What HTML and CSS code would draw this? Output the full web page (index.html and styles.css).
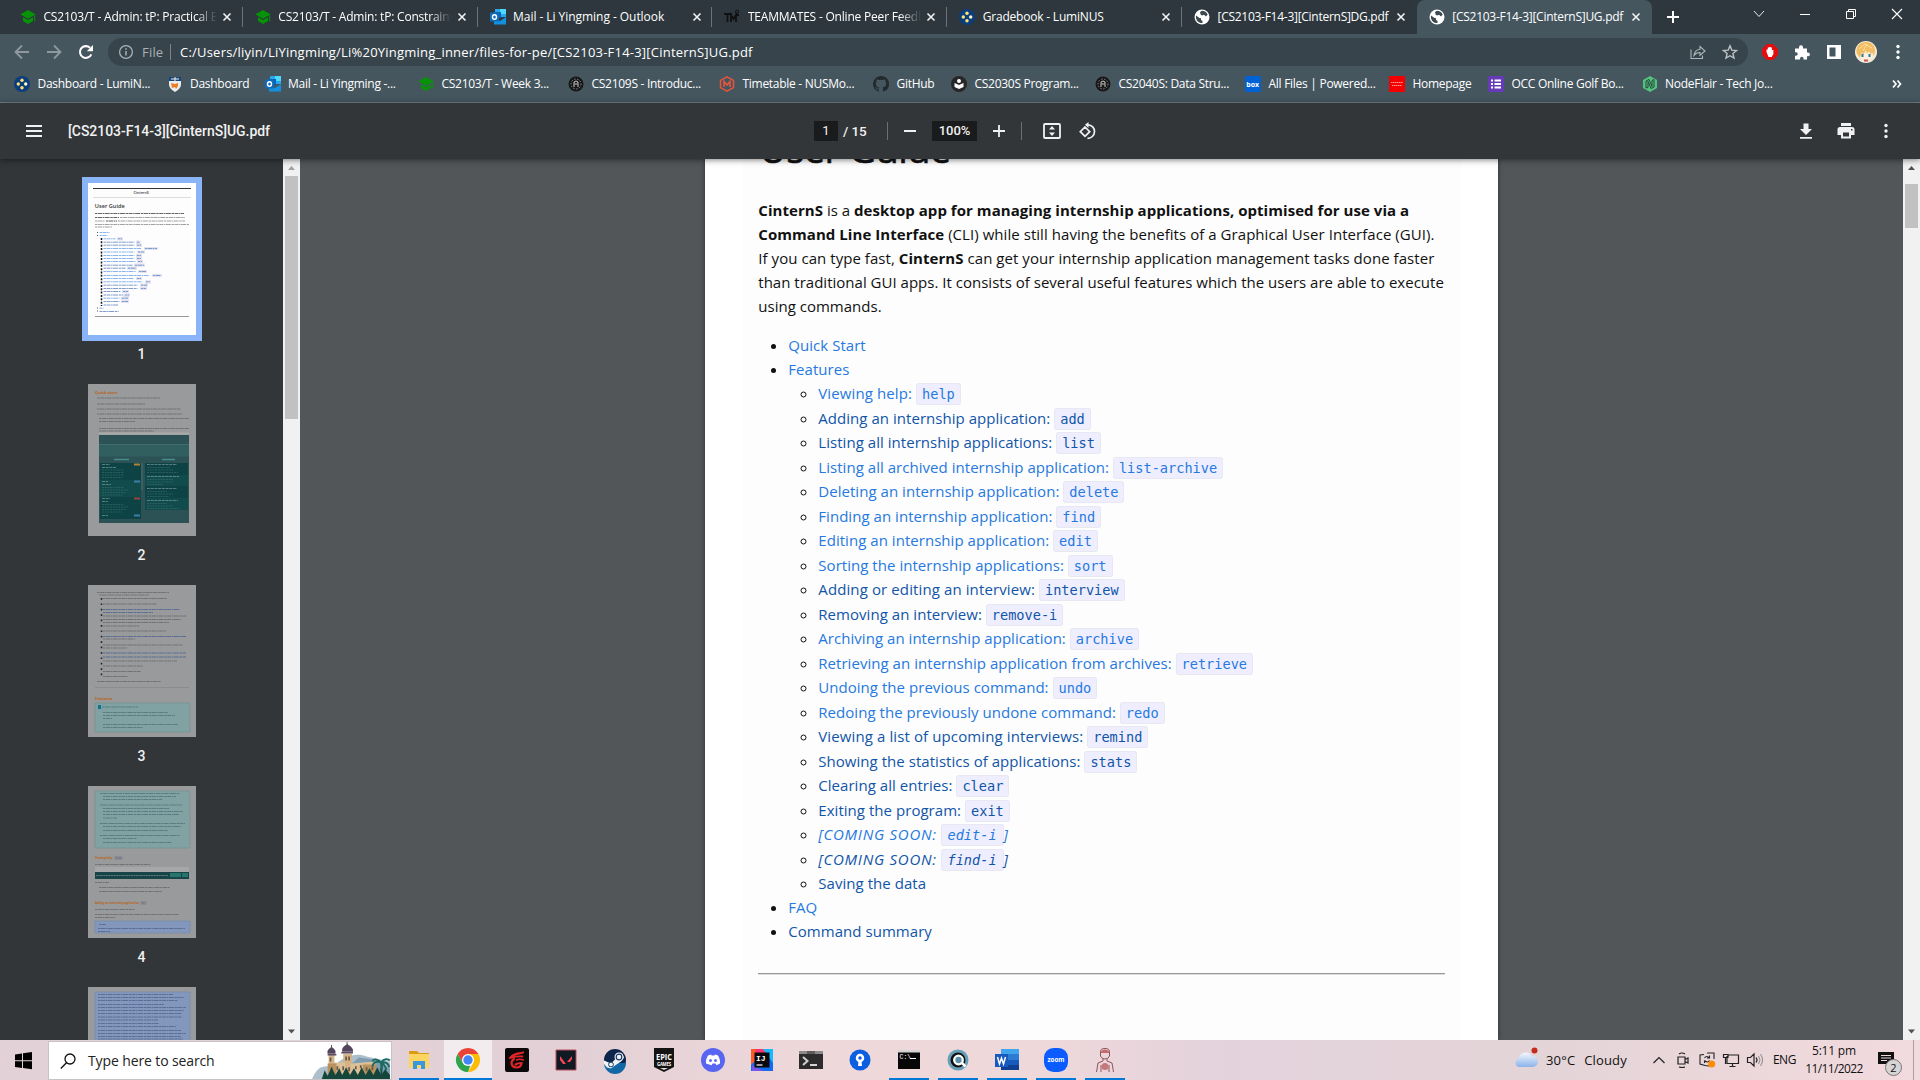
FILE: index.html
```html
<!DOCTYPE html>
<html lang="en">
<head>
<meta charset="utf-8">
<title>[CS2103-F14-3][CinternS]UG.pdf</title>
<link rel="stylesheet" href="styles.css">
</head>
<body>
<svg class="defs" width="0" height="0">
  <symbol id="cap" viewBox="0 0 16 16"><path fill="#079307" d="M8 1l7.500 4.200v.3L8 9.700.5 5.500v-.3zM3 8.300l5 2.800 5-2.800v3.600L8 15l-5-3.100zM14.200 6.500h1v6h-1z"/></symbol>
  <symbol id="outlook" viewBox="0 0 16 16"><path fill="#28a8ea" d="M5 0h11v8H5z"/><path fill="#50d9ff" d="M10 0h6v5h-6z"/><path fill="#0364b8" d="M4 3h7v6H4z"/><path fill="#1490df" d="M4 15.500V9l6 3 6-4v7.500z"/><path fill="#0f6cbd" d="M0 3.500h9v9H0z"/><ellipse cx="4.500" cy="8" rx="2" ry="2.300" fill="none" stroke="#fff" stroke-width="1.400"/></symbol>
  <symbol id="lumi" viewBox="0 0 16 16"><circle cx="8" cy="8" r="8" fill="#0b3d7f"/><g fill="#fbe66b"><circle cx="8" cy="4.300" r="1.700"/><circle cx="8" cy="11.700" r="1.700"/><circle cx="4.300" cy="8" r="1.700"/></g><circle cx="11.700" cy="8" r="1.700" fill="#fff7c4"/></symbol>
  <symbol id="globe" viewBox="0 0 16 16"><circle cx="8" cy="8" r="7.500" fill="#fff"/><path fill="#3b4950" d="M2 6.500l3.500 2.500 1.500.300v1.700l1.600 1-.200 2C4.500 14.300 2 11.500 1.900 8zM6 3l2-1.200c2.500 0 4.700 1.500 5.700 3.700L12 7.600l-2-1.800-2 .7-1.400-1z"/></symbol>
  <symbol id="x" viewBox="0 0 10 10"><path d="M1.500 1.500l7 7m0-7l-7 7" stroke="#f1f3f4" stroke-width="1.600"/></symbol>
  <symbol id="dots" viewBox="0 0 16 16"><g fill="currentColor"><circle cx="8" cy="2.500" r="1.700"/><circle cx="8" cy="8" r="1.700"/><circle cx="8" cy="13.500" r="1.700"/></g></symbol>
  <symbol id="ring" viewBox="0 0 16 16"><circle cx="8" cy="8" r="7.500" fill="#171717"/><circle cx="8" cy="8" r="5" fill="none" stroke="#888" stroke-dasharray="1.500 1.500"/><path d="M6 11V6l2-1 2 1v5M6.500 8h3" stroke="#ccc" fill="none"/></symbol>
</svg>

<header class="tabs">
  <div class="tab"><svg class="fav"><use href="#cap"/></svg><span class="tab-title">CS2103/T - Admin: tP: Practical Exam</span><svg class="close"><use href="#x"/></svg></div>
  <div class="tab"><svg class="fav"><use href="#cap"/></svg><span class="tab-title">CS2103/T - Admin: tP: Constraints</span><svg class="close"><use href="#x"/></svg></div>
  <div class="tab"><svg class="fav"><use href="#outlook"/></svg><span class="tab-title full">Mail - Li Yingming - Outlook</span><svg class="close"><use href="#x"/></svg></div>
  <div class="tab"><svg class="fav" viewBox="0 0 16 16"><path d="M0 5h8M3.500 5v8M7 13V6l2.500 4L12 6v7" fill="none" stroke="#111" stroke-width="1.800"/><circle cx="13" cy="2.800" r="1.600" fill="none" stroke="#111"/><path d="M11 6h4" stroke="#111" stroke-width="2"/></svg><span class="tab-title">TEAMMATES - Online Peer Feedback</span><svg class="close"><use href="#x"/></svg></div>
  <div class="tab"><svg class="fav"><use href="#lumi"/></svg><span class="tab-title full snug">Gradebook - LumiNUS</span><svg class="close"><use href="#x"/></svg></div>
  <div class="tab"><svg class="fav"><use href="#globe"/></svg><span class="tab-title full tight">[CS2103-F14-3][CinternS]DG.pdf</span><svg class="close"><use href="#x"/></svg></div>
  <div class="tab active"><svg class="fav"><use href="#globe"/></svg><span class="tab-title full tight">[CS2103-F14-3][CinternS]UG.pdf</span><svg class="close"><use href="#x"/></svg></div>
  <svg class="newtab" viewBox="0 0 14 14"><path d="M7 1v12M1 7h12" stroke="#fff" stroke-width="2"/></svg>
  <div class="window-buttons">
    <svg viewBox="0 0 12 12"><path d="M1 3l5 5.500L11 3" fill="none" stroke="#e8eaed"/></svg>
    <svg viewBox="0 0 12 12"><path d="M1 6.500h10" stroke="#fff"/></svg>
    <svg viewBox="0 0 12 12"><path d="M1.500 3.500h7v7h-7zM3.500 3.500v-2h7v7h-2" fill="none" stroke="#fff"/></svg>
    <svg viewBox="0 0 12 12"><path d="M1 1l10 10M11 1L1 11" stroke="#fff" stroke-width="1.100"/></svg>
  </div>
</header>

<div class="toolbar">
  <div class="nav">
    <svg viewBox="0 0 16 16"><path d="M15 8H2M8 1.500L1.500 8 8 14.500" fill="none" stroke="#8d999f" stroke-width="1.800"/></svg>
    <svg viewBox="0 0 16 16"><path d="M1 8h13M8 1.500L14.500 8 8 14.500" fill="none" stroke="#8d999f" stroke-width="1.800"/></svg>
    <svg viewBox="0 0 16 16"><path d="M13.300 10.300A5.900 5.900 0 1 1 12 3.800" fill="none" stroke="#fff" stroke-width="2.100"/><path d="M15 1v6.200H8.800z" fill="#fff"/></svg>
  </div>
  <div class="address">
    <svg class="info" viewBox="0 0 16 16"><circle cx="8" cy="8" r="6.400" fill="none" stroke="#a9b2b7" stroke-width="1.300"/><path d="M8 7v4.500M8 4.300v1.500" stroke="#a9b2b7" stroke-width="1.500"/></svg>
    <span class="scheme">File</span><span class="bar"></span>
    <span class="url">C:/Users/liyin/LiYingming/Li%20Yingming_inner/files-for-pe/[CS2103-F14-3][CinternS]UG.pdf</span>
    <svg class="share" viewBox="0 0 16 16"><path d="M1 5.500v9h11.500v-3M4 11.500c.5-4 3-6 6-6.300V2.500L15 7l-5 4.200V8.500c-3-.2-4.500 1-6 3z" fill="none" stroke="#adb6ba" stroke-width="1.100"/></svg>
    <svg class="star" viewBox="0 0 16 16"><path d="M8 1.800l1.800 4.300 4.700.4-3.600 3 1.100 4.600L8 11.700l-4 2.400 1.100-4.600-3.600-3 4.700-.4z" fill="none" stroke="#bcc3c6" stroke-width="1.400"/></svg>
  </div>
  <div class="extensions">
    <svg viewBox="0 0 16 16"><path d="M5 0h6l5 5v6l-5 5H5l-5-5V5z" fill="#e40d0d"/><path d="M4.500 8V5.500h1.300V3.500h1.400V3h1.400v.5h1.300v2.600h1.500V10l-1.700 3H6.500z" fill="#fff"/></svg>
    <svg viewBox="0 0 16 16"><path d="M1 4.500h4V3.300a2 2 0 0 1 4 0v1.200h4v4h1a1.900 1.900 0 0 1 0 3.800h-1v3.200H9.500v-1a1.700 1.700 0 0 0-3.400 0v1H1v-3.800h1a1.700 1.700 0 0 0 0-3.400H1z" fill="#fff"/></svg>
    <svg viewBox="0 0 16 16"><path fill="#fff" fill-rule="evenodd" d="M1 1h14v14H1zM3.500 3.500v9h6v-9z"/></svg>
    <svg class="avatar" viewBox="0 0 22 22"><circle cx="11" cy="11" r="11" fill="#f3ead8"/><path d="M5 12h12v4l-4 4H9l-4-4z" fill="#fff0e2"/><path d="M1.500 12C1 5 5 1 11 1s9 4 9 9l-1 5-2-4-1 3-2-4-2 3-1-4-3 5-1-3-2 6z" fill="#f2bd62"/><path d="M4 8l6-5 7 4M12 3l-4 7" stroke="#ffe1a0" fill="none"/><path d="M7.500 13v3M14.500 13v3" stroke="#287d91" stroke-width="2"/><path d="M9 18.500h4v2H9z" fill="#c95552"/></svg>
    <svg class="menu"><use href="#dots"/></svg>
  </div>
</div>

<nav class="bookmarks">
  <a style="width:152.500px"><svg><use href="#lumi"/></svg>Dashboard - LumiN...</a>
  <a style="width:98px"><svg viewBox="0 0 16 16"><path d="M2 1h12v7c0 4-3 6-6 8-3-2-6-4-6-8z" fill="#e9edf0"/><path d="M2 1h12v4H2z" fill="#18467d"/><path d="M4 3h8M8 1v4" stroke="#f1f1f1"/><path d="M4 7l4 1 3-1v3l-2 3-1-2-3 1z" fill="#ee7c25"/></svg>Dashboard</a>
  <a style="width:153.500px"><svg><use href="#outlook"/></svg>Mail - Li Yingming -...</a>
  <a style="width:150px"><svg><use href="#cap"/></svg>CS2103/T - Week 3...</a>
  <a style="width:151px"><svg><use href="#ring"/></svg>CS2109S - Introduc...</a>
  <a style="width:154px"><svg viewBox="0 0 16 16"><path d="M8 .8l6.500 3.600v7.200L8 15.200l-6.500-3.600V4.400z" fill="none" stroke="#e8543c" stroke-width="1.500"/><path d="M5 11V5.500l3 3.500 3-3.500V11" fill="none" stroke="#e8543c" stroke-width="1.600"/></svg>Timetable - NUSMo...</a>
  <a style="width:78px"><svg viewBox="0 0 16 16"><path fill="#24292e" d="M8 0a8 8 0 0 0-2.500 15.600c.4 0 .5-.2.500-.4v-1.500c-2.200.5-2.700-1-2.700-1-.4-.9-.9-1.200-.9-1.200-.7-.5.1-.5.1-.5.8 0 1.200.8 1.200.8.7 1.300 1.900.9 2.300.7.100-.5.300-.9.500-1.100-1.800-.2-3.600-.9-3.600-4 0-.9.300-1.600.8-2.100-.1-.2-.4-1 .1-2.100 0 0 .7-.2 2.200.8a7.600 7.600 0 0 1 4 0c1.500-1 2.200-.8 2.200-.8.400 1.100.2 1.900.1 2.100.5.500.8 1.200.8 2.100 0 3.100-1.900 3.700-3.700 3.900.3.300.6.800.6 1.500v2.400c0 .2.100.5.600.4A8 8 0 0 0 8 0z"/></svg>GitHub</a>
  <a style="width:144px"><svg viewBox="0 0 16 16"><circle cx="8" cy="8" r="8" fill="#272727"/><path d="M3.500 7L8 9l4.500-2v4L8 13l-4.500-2z" fill="#fff"/><circle cx="8" cy="5" r="2" fill="#fff"/></svg>CS2030S Program...</a>
  <a style="width:150px"><svg><use href="#ring"/></svg>CS2040S: Data Stru...</a>
  <a style="width:144px"><svg viewBox="0 0 16 16"><rect width="16" height="16" rx="2" fill="#0061d5"/><text x="1.300" y="10.500" font-size="7" font-weight="700" fill="#fff" letter-spacing="0">box</text></svg>All Files | Powered...</a>
  <a style="width:99px"><svg viewBox="0 0 16 16"><path d="M0 0h16v16H0z" fill="#f40000"/><path d="M2 6.500h12M3 9.500h10" stroke="#ff9c94" stroke-dasharray="1.500 .5"/></svg>Homepage</a>
  <a style="width:153.500px"><svg viewBox="0 0 16 16"><rect width="16" height="16" rx="1" fill="#673ab7"/><path d="M3 4.500h2M3 8h2M3 11.500h2M6.500 4.500H13M6.500 8H13M6.500 11.500H13" stroke="#fff" stroke-width="1.800"/></svg>OCC Online Golf Bo...</a>
  <a><svg viewBox="0 0 16 16"><path d="M8 0l7 4v8l-7 4-7-4V4z" fill="#55c17e"/><path d="M4 12V5l3-1.500 3 7V4.500l2-1V11l-3 1.500-3-7v6z" fill="none" stroke="#24483a"/></svg>NodeFlair - Tech Jo...</a>
  <svg class="more" viewBox="0 0 10 10"><path d="M1 1.500L4 5 1 8.500M5.500 1.500l3 3.500-3 3.500" fill="none" stroke="#fff" stroke-width="1.700"/></svg>
</nav>

<div class="pdfbar">
  <svg class="burger" viewBox="0 0 16 16"><path d="M0 3h16M0 8h16M0 13h16" stroke="#f1f1f1" stroke-width="2"/></svg>
  <span class="doc-title">[CS2103-F14-3][CinternS]UG.pdf</span>
  <span class="field page-no">1</span><span class="of">/ 15</span>
  <i class="rule r1"></i>
  <svg class="minus" viewBox="0 0 12 12"><path d="M0 6h12" stroke="#f1f1f1" stroke-width="2"/></svg>
  <span class="field zoom">100%</span>
  <svg class="plus" viewBox="0 0 12 12"><path d="M0 6h12M6 0v12" stroke="#f1f1f1" stroke-width="1.800"/></svg>
  <i class="rule r2"></i>
  <svg class="fit" viewBox="0 0 18 16"><rect x="1" y="1" width="16" height="14" rx="1" fill="none" stroke="#f1f1f1" stroke-width="1.800"/><path d="M9 3l3 3.500H6zM9 13l3-3.500H6z" fill="#f1f1f1"/></svg>
  <svg class="rotate" viewBox="0 0 18 18"><path d="M6 5l4.700 4.700L6 14.400 1.300 9.700zM9 2.800a6.700 6.700 0 1 1-.5 13.500" fill="none" stroke="#f1f1f1" stroke-width="1.700"/><path d="M9.500 0v6L6 2.800z" fill="#f1f1f1"/></svg>
  <div class="pdf-actions">
    <svg viewBox="0 0 18 18"><path d="M6.500 1.500h5v5.500H15l-6 6-6-6h3.500zM3 15h12v1.800H3z" fill="#f1f1f1"/></svg>
    <svg viewBox="0 0 18 18"><path fill="#f1f1f1" fill-rule="evenodd" d="M4 1h10v3H4zM3 5h12a2.500 2.500 0 0 1 2.500 2.500V13H14v3.500H4V13H.5V7.500A2.500 2.500 0 0 1 3 5zm3 5.500v4h6v-4zm8-3.500v1.500h1.500V7z"/></svg>
    <svg viewBox="-1 -1 18 18"><use href="#dots" width="16" height="16"/></svg>
  </div>
</div>

<main class="viewer">
  <aside class="thumbs">
    <figure class="selected">
      <svg viewBox="0 0 108 152">
        <path fill="#fff" d="M0 0h108v152H0z"/><path fill="#fdfdfd" d="M5 6h98v142H5z"/>
        <path d="M5 5.500h98" stroke="#333"/><path d="M5 14.500h98" stroke="#ddd"/>
        <text x="45.500" y="11" font-size="3.700" font-weight="600" fill="#333">CinternS</text>
        <text x="6.800" y="24.500" font-size="5.600" font-weight="600" fill="#333">User Guide</text>
        <path class="ink bold" d="M7 30.500h89M7 34.500h24M18 38h11"/><path class="ink" d="M32 34.500h65M7 38h10M30 38h67M7 41.500h94M7 44h17"/>
        <path class="blue ink" d="M11.500 49.500h10M11.500 52.500h8M15.500 55.800h12M15.500 65.500h38M15.500 69h31M15.500 72.500h31M15.500 75.500h30M15.500 78.500h32M15.500 88.500h32M15.500 92.500h46M15.500 95.500h30M15.500 98.800h39M15.500 115.200h16M11.500 125.200h4"/>
        <path class="navy ink" d="M15.500 59.200h31M15.500 62.200h31M15.500 82.200h29M15.500 85.200h22M15.500 102.200h34M15.500 105.500h34M15.500 108.500h17M15.500 112h20M15.500 118.500h16M15.500 122h15M11.500 128.500h19"/>
        <path d="M29 55.800h6M48 59.200h4.500M48 62.200h6M56 65.500h14M49 69h8M48 72.500h6M48 75.500h6M49 78.500h6M46 82.200h11M39 85.200h10M50 88.500h9M64 92.500h10M48 95.500h6M57 98.800h6M52 102.200h8M52 105.500h7M34 108.500h7M36 112h6M33 115.200h8M33 118.500h8" stroke="#e2e2f2" stroke-width="3.200"/>
        <path class="navy ink" d="M30 55.800h4M49 59.200h3M49 62.200h4M57 65.500h12M50 69h6M49 72.500h4M49 75.500h4M50 78.500h4M47 82.200h9M40 85.200h8M51 88.500h7M65 92.500h8M49 95.500h4M58 98.800h4M53 102.200h6M53 105.500h5M35 108.500h5M37 112h4M34 115.200h6M34 118.500h6"/>
        <path d="M13.500 55v68" stroke="#111" stroke-width="1.500" stroke-dasharray="2 1.350"/><path d="M9.500 49v4M9.500 124.500v4.500" stroke="#555" stroke-dasharray="1 2"/>
        <path d="M7 133.500h94" stroke="#999"/>
      </svg>
      <figcaption>1</figcaption>
    </figure>
    <figure>
      <svg viewBox="0 0 108 152">
        <path fill="#989a9b" d="M0 0h108v152H0z"/>
        <text x="7" y="10" font-size="4" font-weight="700" fill="#b96522">Quick start</text>
        <path class="ink dim" d="M9 14h63M9 20h48M9 25h84M9 30h85M11 34.500h90M11 37.500h36M11 44.500h90M11 47h55"/>
        <path d="M11 49.500h90" stroke="#aaa" stroke-width="2"/>
        <path fill="#2c5255" d="M11 51h90v88H11z"/><path fill="#315f60" d="M11 61h90v11.500H11z"/><path d="M11 60.500h90" stroke="#49797a" stroke-width=".7"/>
        <path fill="#0d4344" d="M12 79h41v56H12zM57 79h43v47H57z"/><path fill="#124b4c" d="M12 96h41v17H12zM57 91h43v11H57zM57 114h43v12H57z"/>
        <path d="M26 75.500h15M74 75.500h13" stroke="#438d8e" stroke-width="1.500"/>
        <path d="M46 80.500h6" stroke="#b5823a" stroke-width="2"/><path d="M46 97.500h6M46 131.500h6" stroke="#3b7eaa" stroke-width="2"/><path d="M46 114.500h6" stroke="#9d4040" stroke-width="2"/>
        <path stroke="#6b9192" stroke-width=".8" stroke-dasharray="3 .7" d="M14 80.500h8M14 83.500h14M14 97.500h6M14 100.500h9M14 114.500h8M14 117.500h6M14 131.500h6M59 80.500h30M59 92.500h32M59 104.500h30M59 116.500h31"/>
        <path stroke="#3c6e6f" stroke-width=".6" stroke-dasharray="2 .7" d="M14 86h22M14 88.500h22M14 91h22M14 93.500h20M14 103.500h22M14 106h26M14 108.500h24M14 111h20M14 120.500h22M14 123h26M14 125.500h24M14 128h20M59 83.500h23M59 86h26M59 88.500h31M59 95.500h26M59 98h27M59 100.500h16M59 107.500h20M59 110h26M59 112.500h22M59 119.500h20M59 122h26M59 124.500h32"/>
        <path d="M54 79v27" stroke="#426768" stroke-width="1.500"/>
      </svg>
      <figcaption>2</figcaption>
    </figure>
    <figure>
      <svg viewBox="0 0 108 152">
        <path fill="#989a9b" d="M0 0h108v152H0z"/>
        <path class="ink dim" d="M9 7.500h72M11 10h50M15 13.500h64M15 19h54M15 31h84M15 34.500h78M15 37.500h66M15 41h36M15 46h63M15 54h32M15 60h80M15 63h24M15 76h74M15 81h40M15 86.500h38M15 91.500h25M9 96.500h64"/>
        <path class="ink navydim" d="M15 24.500h77M15 27.500h50M15 51.500h83M15 68h83M15 72h83"/>
        <path d="M13.500 13v79" stroke="#222" stroke-width="1.500" stroke-dasharray="1.700 3.700"/><path d="M7 102.500h94" stroke="#858787" stroke-width=".7"/>
        <text x="7" y="115" font-size="4" font-weight="700" fill="#b96522">Features</text>
        <path fill="#81a2a3" stroke="#719292" stroke-width=".6" d="M7 118h95v29H7z"/><path fill="#14708d" d="M10 120h3v4h-3z"/>
        <path class="ink teal" d="M14 122h36M15 127.500h65M15 130.500h72M15 133.500h9M15 139.500h75M15 142.500h40"/>
      </svg>
      <figcaption>3</figcaption>
    </figure>
    <figure>
      <svg viewBox="0 0 108 152">
        <path fill="#989a9b" d="M0 0h108v152H0z"/><path fill="#81a2a3" stroke="#719292" stroke-width=".6" d="M7 5h95v57H7z"/>
        <path class="ink teal" d="M12 7.500h80M15 10.500h73M15 13.500h59M12 19h82M15 22.500h66M15 25.500h80M15 28.500h76M15 32h14M12 37.500h85M15 40.500h78M15 44.500h65M12 49.500h80M15 52.500h34M15 56.500h69"/>
        <text x="7" y="73.300" font-size="2.700" font-weight="700" fill="#b96522">Viewing help:</text><text x="7" y="118" font-size="2.700" font-weight="700" fill="#b96522">Adding an internship application:</text>
        <path d="M26.500 72h8M52.500 117h6" stroke="#8b8c96" stroke-width="4"/><path class="ink dim" d="M27.500 72h6M53.500 117h4M7 78.500h56M7 96.500h14M11 101.500h71M11 105.500h63M7 123.500h40M7 128.500h84M7 131.500h20"/>
        <path fill="#a5a7a8" d="M7 81h94v5H7z"/><path fill="#184448" d="M7 86h94v7H7z"/><path fill="#25746d" d="M82 87h11v4H82zM94 87h6v4h-6z"/><path d="M8 89.500h72" stroke="#6f9293" stroke-width=".7" stroke-dasharray="2 .5"/>
        <path fill="#8297bb" stroke="#7288af" stroke-width=".6" d="M7 135h95v12H7z"/><path class="ink navydim" d="M11 138.500h7M10 142.500h87M10 145.500h12"/>
      </svg>
      <figcaption>4</figcaption>
    </figure>
    <figure>
      <svg viewBox="0 0 108 152">
        <path fill="#989a9b" d="M0 0h108v152H0z"/><path fill="#8297bb" stroke="#7288af" stroke-width=".6" d="M7 5h95v147H7z"/>
        <path class="ink navydim" d="M10 7.500h75M10 10.500h86M10 13.500h80M10 17.500h66M10 20.500h88M10 23.500h86M10 26.500h84M10 30h84M10 33h60M10 36.500h61M10 39.500h78M10 43.500h83M10 46.500h88M10 49.500h83M10 52h85"/>
      </svg>
    </figure>
  </aside>
  <div class="scroll side"><svg viewBox="0 0 17 17"><path d="M5 11h7L8.500 7z" fill="#a0a0a0"/></svg><span></span><svg class="down" viewBox="0 0 17 17"><path d="M5 6.500h7l-3.500 4z" fill="#505050"/></svg></div>
  <section class="canvas">
    <article class="paper">
      <div class="content">
        <h1>User Guide</h1>
        <p><b>CinternS</b> is a <b>desktop app for managing internship applications, optimised for use via a</b><br><span class="loose"><b>Command Line Interface</b> (CLI) while still having the benefits of a Graphical User Interface (GUI).</span><br><span class="loose">If you can type fast, <b>CinternS</b> can get your internship application management tasks done faster</span><br>than traditional GUI apps. It consists of several useful features which the users are able to execute<br>using commands.</p>
        <ul class="toc">
          <li><a>Quick Start</a></li>
          <li><a>Features</a>
            <ul>
              <li><a class="w">Viewing help: <code>help</code></a></li>
              <li><a class="v">Adding an internship application: <code>add</code></a></li>
              <li><a class="v">Listing all internship applications: <code>list</code></a></li>
              <li><a>Listing all archived internship application: <code>list-archive</code></a></li>
              <li><a>Deleting an internship application: <code>delete</code></a></li>
              <li><a>Finding an internship application: <code>find</code></a></li>
              <li><a>Editing an internship application: <code>edit</code></a></li>
              <li><a>Sorting the internship applications: <code>sort</code></a></li>
              <li><a class="v w">Adding or editing an interview: <code>interview</code></a></li>
              <li><a class="v">Removing an interview: <code>remove-i</code></a></li>
              <li><a>Archiving an internship application: <code>archive</code></a></li>
              <li><a>Retrieving an internship application from archives: <code>retrieve</code></a></li>
              <li><a>Undoing the previous command: <code>undo</code></a></li>
              <li><a>Redoing the previously undone command: <code>redo</code></a></li>
              <li><a class="v w">Viewing a list of upcoming interviews: <code>remind</code></a></li>
              <li><a class="v">Showing the statistics of applications: <code>stats</code></a></li>
              <li><a class="v">Clearing all entries: <code>clear</code></a></li>
              <li><a class="v">Exiting the program: <code>exit</code></a></li>
              <li><a class="soon">[COMING SOON: <code>edit-i</code>]</a></li>
              <li><a class="v soon">[COMING SOON: <code>find-i</code>]</a></li>
              <li><a class="v">Saving the data</a></li>
            </ul>
          </li>
          <li><a>FAQ</a></li>
          <li><a class="v">Command summary</a></li>
        </ul>
        <hr>
      </div>
    </article>
  </section>
  <div class="scroll main"><svg viewBox="0 0 17 17"><path d="M5 11h7L8.500 7z" fill="#505050"/></svg><span></span><svg class="down" viewBox="0 0 17 17"><path d="M5 6.500h7l-3.500 4z" fill="#505050"/></svg></div>
</main>

<footer class="taskbar">
  <div class="start"><svg width="17" height="17" viewBox="0 0 17 17"><path d="M0 2.500l7-1v6.700H0zM8 1.300L17 0v8.200H8zM0 9.200h7V16l-7-1zM8 9.200h9V17.300L8 16z"/></svg></div>
  <div class="search">
    <svg class="lens" viewBox="0 0 16 16"><circle cx="10" cy="6" r="5" fill="none" stroke="#111" stroke-width="1.300"/><path d="M6.500 9.700L.8 15.400" stroke="#111" stroke-width="1.400"/></svg>
    <span>Type here to search</span>
    <svg class="castle" viewBox="0 0 80 38">
      <path d="M0 38c5-13 12-15 22-12 10-13 25-15 34-11l24 5v18z" fill="#aebfcb"/><path d="M12 38c5-10 14-8 20-8l16-14 15 2 17 9v11z" fill="#7f9db0"/>
      <path d="M17 13h6v25h-6zM32 12h9v26h-9z" fill="#d3b387"/><path d="M22 21h12v17H22zM40 22l25-2v18H40z" fill="#dcc196"/><path d="M16 22h9v12h-9zM52 23h14v11H52z" fill="#b9935f"/>
      <path d="M16 12c-1-4 2-5 4-7 2 2 5 3 4 7zM31 10c-1-5 3-6 5-8 3 2 7 4 6 8z" fill="#54455e"/><path d="M20 3v4M36 0v4" stroke="#555"/><path d="M16 13h9M30 11h12" stroke="#5c4b62" stroke-width="1.500"/>
      <path d="M19 16v4M35 15v4M38 15v4M20 26v4M26 25v4M32 25v4M38 26v4M45 25v3M50 24v3M56 26v4M62 25v4" stroke="#6b5a4b" stroke-width="1.800"/>
      <path d="M71 38c0-7 1-12 0-17" stroke="#1b4f4c" stroke-width="2" fill="none"/><path d="M71 21c-5-2-8 0-9 4M71 21c-4-4-8-4-9-1M71 21c3-4 7-4 9-2M71 21c4-1 8 1 8 5M71 21c1 3 1 6-1 8M71 21c3 2 5 5 5 8" fill="none" stroke="#196b63" stroke-width="2"/>
      <path d="M10 38l3-9 3 6 4-9 4 8 4-7 3 7 4-8 4 8 4-7 4 7 4-8 4 8 4-7 4 7 4-8 4 8 4-6 5 6v4z" fill="#16453c"/>
    </svg>
  </div>
  <div class="apps">
    <div class="app open"><svg viewBox="0 0 24 24"><path d="M2 3h8l2 2h10v5H2z" fill="#d99b12"/><path d="M2 6h20v14H2z" fill="#fcd462"/><path d="M6 21v-8h12v8h-4v-4h-4v4z" fill="#3a96dd"/></svg></div>
    <div class="app open current"><svg viewBox="0 0 24 24"><path d="M12 6h10.400a12 12 0 0 1-10.400 18l5.200-9z" fill="#fbbc05"/><path d="M1.600 6A12 12 0 0 1 22.400 6H12l-5.200 9z" fill="#ea4335"/><path d="M1.600 6l5.200 9 7.500 2.600L12 24A12 12 0 0 1 1.600 6z" fill="#2da44e"/><circle cx="12" cy="12" r="6" fill="#fff"/><circle cx="12" cy="12" r="4.700" fill="#4285f4"/></svg></div>
    <div class="app"><svg viewBox="0 0 24 24"><rect width="24" height="24" rx="2" fill="#0a0808"/><g fill="none" stroke="#e0262a" stroke-linecap="round"><path d="M18 4.500c-4 1.500-8 .5-12 4.500" stroke-width="2.200"/><path d="M17.500 8.500C12 8 8.500 9 4.500 10" stroke-width="1.800"/><path d="M9 11c-4 2.500-3 8 2 8.500 4 0 5.500-2 5.500-4.500-2 0-4 .2-6 1.500" stroke-width="2.200"/><path d="M18.500 12q-4-1.500-7 0" stroke-width="1.400"/></g></svg></div>
    <div class="app"><svg viewBox="0 0 24 24"><path d="M2 2h20v20H2z" fill="#101a24" stroke="#b94b59"/><path d="M6 8l6 8H9l-3-4zM18 8l-5 6h3l2-3z" fill="#fa4454"/></svg></div>
    <div class="app"><svg viewBox="0 0 24 24"><circle cx="12" cy="12" r="11" fill="#0d254b"/><path d="M1 15a11 11 0 0 0 22 0z" fill="#1267a5"/><path d="M1 12.500l7 3 4-4 2-5 5-1 2 4-3 4-6 4-4 3-4-1-3-3.500z" fill="#f1f3f5"/><circle cx="16" cy="9" r="4.500" fill="#f1f3f5"/><circle cx="16" cy="9" r="2.800" fill="none" stroke="#153b65" stroke-width="1.200"/><circle cx="8" cy="16.500" r="2.400" fill="#f1f3f5" stroke="#153b65"/></svg></div>
    <div class="app"><svg viewBox="0 0 24 24"><path d="M2 0h20v19l-10 5-10-5z" fill="#141414"/><text x="4" y="12" font-size="9.500" font-weight="700" textLength="16" lengthAdjust="spacingAndGlyphs" fill="#fff">EPIC</text><text x="5" y="17.500" font-size="4.300" font-weight="700" textLength="14" fill="#fff">GAMES</text><path d="M8 20h8l-4 2z" fill="#ddd"/></svg></div>
    <div class="app"><svg viewBox="0 0 24 24"><circle cx="12" cy="12" r="12" fill="#5865f2"/><path d="M7 7.500l3-1 .6 1h2.800l.6-1 3 1c1.500 2.500 2.300 5 2 8l-3.500 1.800-1-1.700h-3l-1 1.700L5 15.500c-.3-3 .5-5.500 2-8z" fill="#fff"/><ellipse cx="9.500" cy="12.500" rx="1.400" ry="1.600" fill="#5865f2"/><ellipse cx="14.500" cy="12.500" rx="1.400" ry="1.600" fill="#5865f2"/></svg></div>
    <div class="app"><svg viewBox="0 0 24 24"><path d="M1 1h22v22H1z" fill="#126bf0"/><path d="M1 1h16L1 17z" fill="#fe5b2a"/><path d="M5 1h18L9 14z" fill="#f73573"/><path d="M13 1h10v14z" fill="#18b9ff"/><path d="M2 17l12 6H2z" fill="#7756e8"/><path d="M4.500 4.500h15v15h-15z" fill="#08080d"/><text x="6" y="12.500" font-size="8" font-weight="700" font-family="Liberation Mono" fill="#fff">IJ</text><path d="M6.500 17h6" stroke="#fff" stroke-width="1.200"/></svg></div>
    <div class="app"><svg viewBox="0 0 24 24"><path d="M0 3h24v18H0z" fill="#2c2c2c"/><path d="M0 3h24v3H0z" fill="#8a8a8a"/><path d="M8 3h8v3H8z" fill="#5b5b5b"/><path d="M4 9l4.500 4L4 17" fill="none" stroke="#d0d0d0" stroke-width="2"/><path d="M11 17h7" stroke="#fff" stroke-width="1.600"/></svg></div>
    <div class="app"><svg viewBox="0 0 24 24"><circle cx="12" cy="12" r="10.500" fill="#0b5fe0"/><circle cx="12" cy="10" r="3" fill="none" stroke="#fff" stroke-width="2.500"/><path d="M10.500 13h3l.5 5h-4z" fill="#fff"/></svg></div>
    <div class="app open"><svg viewBox="0 0 24 24"><path d="M1 2h22v19H1z" fill="#070707"/><path d="M1 2h22v2.500H1z" fill="#d4d4d4"/><text x="2.500" y="11" font-size="6.500" font-family="Liberation Mono" fill="#fff">C:\</text><path d="M13 10.500h6" stroke="#fff"/></svg></div>
    <div class="app open"><svg viewBox="0 0 24 24"><circle cx="12" cy="12" r="10.500" fill="#659fb8"/><circle cx="12" cy="12" r="7.500" fill="#111"/><circle cx="12.500" cy="12" r="4.300" fill="#5b8fa6" stroke="#fff" stroke-width="2.300"/><path d="M15.500 14.500l4 4" stroke="#fff" stroke-width="2.500"/></svg></div>
    <div class="app open"><svg viewBox="0 0 24 24"><path d="M6 1h18v6H6z" fill="#41a5ee"/><path d="M6 6h18v6H6z" fill="#2b7cd3"/><path d="M6 12h18v5H6z" fill="#185abd"/><path d="M6 17h18v5H6z" fill="#103f91"/><path d="M0 6h13v13H0z" fill="#185abd"/><path d="M2.500 9l2 7 2-6 2 6 2-7" fill="none" stroke="#fff" stroke-width="1.500"/></svg></div>
    <div class="app open"><svg viewBox="0 0 24 24"><rect width="24" height="24" rx="9.500" fill="#0b5cff"/><text x="3.500" y="14" font-size="7" font-weight="700" textLength="17" lengthAdjust="spacingAndGlyphs" fill="#fff">zoom</text></svg></div>
    <div class="app open"><svg viewBox="0 0 24 24"><g fill="none" stroke="#8f555a"><path d="M7.500 8V3.500Q7.500.5 12 .5t4.500 3V8q-1 3-4.500 3t-4.500-3zM10 11v2l-5 2-1.500 9M14 11v2l5 2 1.500 9M8 17v7M16 17v7"/></g><path d="M8 3q4-3 8 0v2H8z" fill="#c66b6c"/><circle cx="12" cy="18.500" r="3.500" fill="#c4787b"/></svg></div>
  </div>
  <div class="weather"><svg viewBox="0 0 26 22"><defs><linearGradient id="cl" x2="0" y2="1"><stop stop-color="#f3f8fd"/><stop offset="1" stop-color="#8bb3ea"/></linearGradient></defs><path d="M5 20a5 5 0 0 1 .5-9A7.500 7.500 0 0 1 19 9a5.500 5.500 0 0 1 1 11z" fill="url(#cl)"/><circle cx="21.500" cy="3.500" r="3" fill="#c42b1c"/></svg><span>30°C</span><span>Cloudy</span></div>
  <div class="tray">
    <svg viewBox="0 0 16 16"><path d="M2.500 11L8 5.500l5.500 5.500" fill="none" stroke="#222" stroke-width="1.200"/></svg>
    <svg viewBox="0 0 16 16"><path d="M3 5h7v7H3zM10 7.500l3-1.500v5l-3-1.500M4 2q3-2 6 0M4 15q3 1 6 0" fill="none" stroke="#222" stroke-width="1.200"/></svg>
    <svg viewBox="0 0 16 16"><path d="M15 7V1H8M5 2.500L1 3v9l5 1.500 4 .5M5.500 6q2-3 5 0M10.500 3.500V6H8M10.500 8.500q-2 3-5 0M5.500 11V8.500" fill="none" stroke="#222" stroke-width="1.100"/><circle cx="12.700" cy="12" r="3.500" fill="#ff8c00"/></svg>
    <svg viewBox="0 0 16 16"><path d="M4 4V11.500h11.500V3H5M9.500 11.500V14M6.500 14.500h6M.5 2.500h4.500v3H.5zM2.500 5.500V12" fill="none" stroke="#222" stroke-width="1.200"/></svg>
    <svg viewBox="0 0 16 16"><path d="M.5 5.500h3L7 2v12l-3.500-3.500h-3zM9 5.500q2 2.500 0 5" fill="none" stroke="#222" stroke-width="1.200"/><path d="M11.500 4q3 4 0 8M13.500 2q4 6 0 12" fill="none" stroke="#888"/></svg>
  </div>
  <span class="lang">ENG</span>
  <div class="clock"><span>5:11 pm</span><span class="date">11/11/2022</span></div>
  <div class="notify"><svg viewBox="0 0 16 15"><path d="M0 0h16v12h-5v3l-3-3H0z" fill="#111"/><path d="M3 3.500h10M3 6h10M3 8.500h6" stroke="#eed8dc"/></svg><span class="badge">2</span></div>
</footer>
</body>
</html>
```
FILE: styles.css
```css
* { box-sizing: border-box; }
body { margin: 0; width: 1920px; height: 1080px; overflow: hidden; display: flex; flex-direction: column; font: 12px/16px "Open Sans", "Noto Sans", sans-serif; color: #fff; background: #525659; }
.defs { position: absolute; }
svg { display: block; flex: none; overflow: visible; }

/* Tab strip */
.tabs { flex: none; height: 34px; background: #2d373d; display: flex; align-items: center; padding-left: 8px; }
.tab { width: 234.800px; height: 34px; display: flex; align-items: center; padding-left: 12px; position: relative; letter-spacing: -.2px; }
.tab::after { content: ""; position: absolute; right: 0; top: 7px; width: 1px; height: 20px; background: #68747a; }
.tab:nth-child(6)::after, .tab.active::after { display: none; }
.tab.active { background: #45565f; border-radius: 8px 8px 0 0; }
.fav { width: 16px; height: 16px; margin-right: 7.500px; }
.tab-title { width: 173.500px; white-space: nowrap; overflow: hidden; -webkit-mask-image: linear-gradient(90deg, #000 152px, transparent 173px); mask-image: linear-gradient(90deg, #000 152px, transparent 173px); margin-right: 5px; }
.tab-title.full { -webkit-mask-image: none; mask-image: none; letter-spacing: -.05px; }
.tab-title.snug { letter-spacing: -.2px; }
.tab-title.tight { letter-spacing: -.270px; }
.close { width: 10px; height: 10px; }
.newtab { width: 14px; height: 14px; margin-left: 14px; }
.window-buttons { margin-left: 73px; display: flex; gap: 34px; margin-top: -6px; }
.window-buttons svg { width: 12px; height: 12px; }

/* Address row */
.toolbar { flex: none; height: 36px; background: #45565f; display: flex; align-items: center; }
.nav { width: 108px; display: flex; gap: 16px; padding-left: 14px; }
.nav svg { width: 16px; height: 16px; }
.address { width: 1640px; height: 28px; border-radius: 14px; background: #37444b; display: flex; align-items: center; padding-left: 10px; font-size: 13px; }
.info { width: 16px; height: 16px; }
.scheme { color: #a9b2b7; margin-left: 8px; width: 27px; letter-spacing: .2px; }
.bar { width: 1px; height: 16px; background: #79858b; margin: 0 9px 0 1px; }
.url { letter-spacing: .215px; width: 1510px; white-space: nowrap; }
.share, .star { width: 16px; height: 16px; }
.star { margin-left: 16px; }
.extensions { display: flex; align-items: center; padding-left: 14px; gap: 16px; }
.extensions svg { width: 16px; height: 16px; }
.extensions .avatar { width: 22px; height: 22px; margin-left: -3px; }
.extensions .menu { margin-left: -3px; }

/* Bookmarks */
.bookmarks { flex: none; height: 33px; padding: 0 18px 4px 14px; display: flex; align-items: center; background: #45565f; border-bottom: 1px solid #75838a; letter-spacing: -.28px; }
.bookmarks a { display: flex; align-items: center; gap: 7.500px; white-space: nowrap; flex: none; }
.bookmarks svg { width: 16px; height: 16px; }
.bookmarks .more { width: 10px; height: 10px; margin-left: auto; }

/* Viewer toolbar */
.pdfbar { flex: none; height: 56px; background: #323639; display: flex; align-items: center; padding-left: 26px; font: 500 14px/20px Roboto, sans-serif; color: #f1f1f1; position: relative; z-index: 2; box-shadow: 0 1px 6px rgba(0,0,0,.5); }
.burger { width: 16px; height: 16px; margin-right: 26px; }
.doc-title { width: 746px; letter-spacing: -.03px; }
.field { background: #191b1c; height: 20px; text-align: center; font-size: 13px; }
.page-no { width: 24px; font-weight: 400; }
.of { margin-left: 5px; width: 25px; font-size: 13.500px; letter-spacing: -.1px; white-space: nowrap; }
.rule { width: 1px; height: 18px; background: #6d7072; }
.r1 { margin: 0 16px 0 19px; }
.minus, .plus { width: 12px; height: 12px; }
.zoom { width: 45px; margin: 0 16px; }
.r2 { margin: 0 21px 0 16px; }
.fit { width: 18px; height: 16px; margin-right: 18px; }
.rotate { width: 18px; height: 18px; }
.pdf-actions { margin-left: auto; display: flex; gap: 22px; padding-right: 25px; }
.pdf-actions svg { width: 18px; height: 18px; }

/* Viewer body */
.viewer { flex: none; height: 881px; display: flex; overflow: hidden; }
.thumbs { width: 283px; background: #323639; padding-top: 24px; overflow: hidden; }
.thumbs figure { margin: 0 0 32px 88px; width: 108px; }
.thumbs svg { width: 108px; height: 152px; overflow: hidden; }
.selected svg { box-shadow: 0 0 0 6px #8ab4f8; }
.thumbs figcaption { font: 500 14px/17px Roboto, sans-serif; text-align: center; padding: 11px 1px 0 0; height: 17px; color: #f1f1f1; }
.ink { stroke: #a2a2a2; stroke-width: 1; stroke-dasharray: 2.500 .5 4 .6 1.500 .5 5 .7; }
.ink.bold { stroke: #666; stroke-width: 1.200; }
.ink.blue { stroke: #87b4ee; }
.ink.navy { stroke: #7f9cc8; }
.ink.dim { stroke: #707274; }
.ink.navydim { stroke: #5b6d94; }
.ink.teal { stroke: #587c80; }
.scroll { width: 17px; flex: none; background: #f1f1f1; display: flex; flex-direction: column; align-items: center; }
.scroll svg { width: 17px; height: 17px; }
.scroll span { width: 13px; background: #c1c1c1; }
.side span { height: 243px; }
.main span { height: 44px; margin-top: 8px; }
.scroll .down { margin-top: auto; }
.canvas { flex: 1; background: #525659; }
.paper { width: 793px; height: 881px; margin-left: 405px; background: #fff; padding: 0 37px 0 38px; box-shadow: 0 0 4px rgba(0,0,0,.5); }
.content { background: #fdfdfd; height: 881px; padding: 0 16px 0 15.300px; overflow: hidden; color: #111; font-size: 15px; line-height: 24px; white-space: nowrap; }
h1 { font-size: 38px; font-weight: 500; line-height: 52px; letter-spacing: -.650px; margin: -37px 0 24px 1px; -webkit-text-stroke: .6px #111; }
p { margin: 0 0 15px; letter-spacing: .01px; }
p > b { letter-spacing: .05px; }
.loose { letter-spacing: .052px; }
b { font-weight: 700; }
ul { margin: 0; padding-left: 30px; }
li > ul > li { height: 24.500px; line-height: 24px; }
li > ul > li:last-child { height: 24px; }
.toc a { color: #2679e0; letter-spacing: .04px; }
.toc a.v { color: #1155a8; }
.toc a.w { letter-spacing: .11px; }
.toc a.soon { font-style: italic; letter-spacing: .75px; }
code, .toc a code { font: 13.600px/16px "DejaVu Sans Mono", monospace; letter-spacing: 0; background: #eef; border: 1px solid #e8e8f2; border-radius: 3px; padding: 2px 5px; }
.toc .soon code { font-style: italic; padding-right: 6px; }
hr { margin: 29.500px 0 0; border: 0; height: 1px; background: #999; box-shadow: 0 1px #ddd; }

/* Taskbar */
.taskbar { flex: none; height: 40px; display: flex; align-items: center; color: #111; background: linear-gradient(90deg, #e2d2d7, #e2d0d6 30%, #efd8da 43%, #eed8da 54%, #e3d2dc 64%, #e3d4d7 80%, #f2dade); }
.start { width: 48px; padding-left: 15px; }
.search { width: 344px; height: 39px; margin-top: 1px; background: #fff; border: 1px solid #c7c3c5; display: flex; align-items: center; padding-left: 11px; font-size: 14px; letter-spacing: -.120px; color: #222; }
.lens { width: 16px; height: 18px; margin-right: 12px; }
.castle { width: 80px; height: 37px; margin-left: auto; overflow: hidden; }
.apps { display: flex; margin-left: 3px; gap: 1px; }
.app { width: 48px; height: 40px; display: flex; align-items: center; justify-content: center; position: relative; }
.app svg { width: 24px; height: 24px; }
.open::after { content: ""; position: absolute; left: 4px; right: 4px; bottom: 0; height: 2px; background: #0078d7; }
.current { background: #f3ecef; }
.current::after { left: 0; right: 0; }
.weather { display: flex; align-items: center; margin-left: 384px; font-size: 13px; }
.weather svg { width: 26px; height: 22px; margin: -4px 7px 0 0; }
.weather span { margin-right: 9px; letter-spacing: .150px; }
.tray { display: flex; gap: 8px; margin-left: 15px; }
.tray svg { width: 16px; height: 16px; }
.lang { margin-left: 10px; letter-spacing: -.450px; }
.clock { width: 60px; margin-left: 8px; display: flex; flex-direction: column; align-items: center; line-height: 18px; letter-spacing: -.2px; }
.date { letter-spacing: -.620px; }
.notify { position: relative; margin-left: 14px; width: 36px; height: 40px; padding-top: 12px; border-right: 1px solid #aaa0a3; }
.notify svg { width: 16px; height: 15px; }
.badge { position: absolute; left: 7px; top: 19px; width: 17px; height: 17px; border-radius: 50%; background: #d7d4d5; border: 1px solid #777; font-size: 11px; line-height: 15px; text-align: center; }
```
